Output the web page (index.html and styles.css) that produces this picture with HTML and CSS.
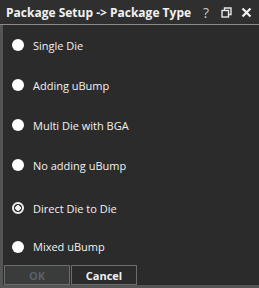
FILE: index.html
```html
<!DOCTYPE html>
<html lang="en">
<head>
    <meta charset="UTF-8">
    <title>Package Setup -> Package Type</title>
    <link rel="stylesheet" href="styles.css">
</head>
<body>
    <div class="dialog">
        <div class="titlebar">
            <span class="title">Package Setup -&gt; Package Type</span>
            <span class="tool help">?</span>
            <span class="tool">
                <svg width="11" height="11" viewBox="0 0 11 11">
                    <rect x="1" y="3.5" width="6.5" height="6.5" fill="none" stroke="#e6e6e6" stroke-width="1.4"/>
                    <path d="M3.5 3.5V1H10V7.5H7.5" fill="none" stroke="#e6e6e6" stroke-width="1.4"/>
                </svg>
            </span>
            <span class="tool">
                <svg width="11" height="11" viewBox="0 0 11 11">
                    <path d="M1.5 1.5L9.5 9.5M9.5 1.5L1.5 9.5" stroke="#f2f2f2" stroke-width="2.2"/>
                </svg>
            </span>
        </div>
        <div class="content">
            <div class="options">
                <label class="option"><span class="radio"></span>Single Die</label>
                <label class="option"><span class="radio"></span>Adding uBump</label>
                <label class="option"><span class="radio"></span>Multi Die with BGA</label>
                <label class="option"><span class="radio"></span>No adding uBump</label>
                <label class="option tall"><span class="radio checked"></span>Direct Die to Die</label>
                <label class="option short"><span class="radio"></span>Mixed uBump</label>
            </div>
            <div class="buttons">
                <button class="btn disabled">OK</button>
                <button class="btn">Cancel</button>
            </div>
        </div>
    </div>
</body>
</html>
```

FILE: styles.css
```css
body {
    margin: 0;
    background-color: #2b2b2b;
    font-family: "Open Sans", "DejaVu Sans", sans-serif;
}
.dialog {
    width: 259px;
    height: 288px;
    display: flex;
    flex-direction: column;
    background-color: #2b2b2b;
}
.titlebar {
    height: 26px;
    display: flex;
    align-items: center;
    padding: 0 3px 0 6px;
    background-color: #2f2f2f;
    border-bottom: 1px solid #8a8a8a;
    box-sizing: border-box;
    color: #f2f2f2;
}
.title {
    flex: 1;
    font-weight: bold;
    font-size: 12px;
    white-space: nowrap;
}
.tool {
    width: 20px;
    display: flex;
    justify-content: center;
    font-size: 14px;
    color: #c8c8c8;
}
.content {
    flex: 1;
    display: flex;
    flex-direction: column;
    border-left: 3px solid #555555;
    border-bottom: 3px solid #555555;
}
.options {
    flex: 1;
    display: flex;
    flex-direction: column;
}
.option {
    height: 40px;
    display: flex;
    align-items: center;
    font-size: 11px;
    color: #f2f2f2;
}
.option.tall {
    height: 43px;
    padding-top: 3px;
    box-sizing: border-box;
}
.option.short {
    height: 37px;
}
.radio {
    width: 12px;
    height: 12px;
    margin: 0 9px 0 9px;
    border-radius: 50%;
    background-color: #ffffff;
    box-sizing: border-box;
}
.radio.checked {
    background-color: #2b2b2b;
    border: 2px solid #f2f2f2;
    background-image: radial-gradient(circle, #f2f2f2 2.5px, #2b2b2b 3px);
}
.buttons {
    display: flex;
    gap: 1px;
    padding-left: 1px;
}
.btn {
    width: 66px;
    height: 20px;
    padding: 0;
    font-family: inherit;
    font-size: 11px;
    font-weight: bold;
    color: #f2f2f2;
    background-color: #2b2b2b;
    border: 1px solid #6c6c6c;
}
.btn.disabled {
    color: #5c6066;
    background-color: #393c3a;
}
```
